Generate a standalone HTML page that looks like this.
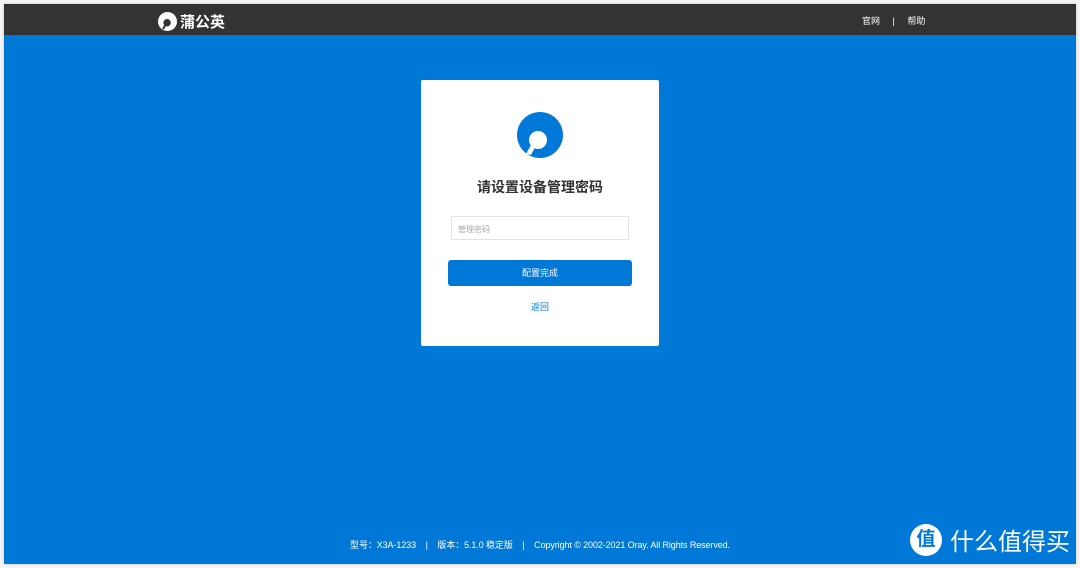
<!DOCTYPE html>
<html><head><meta charset="utf-8"><style>
*{margin:0;padding:0;box-sizing:border-box}
body{width:1080px;height:568px;background:#f4f4f4;font-family:"Liberation Sans","Noto Sans CJK SC",sans-serif;position:relative;overflow:hidden}
.frame{position:absolute;left:4px;top:4px;width:1072px;height:560px;background:#0078d7;box-shadow:0 0 2px #bbb}
.hdr{position:absolute;left:0;top:0;width:1072px;height:31px;background:#333}
.logo{position:absolute;left:154px;top:7px;display:flex;align-items:center;color:#fff;font-size:15px;font-weight:bold}
.nav{position:absolute;left:858px;top:10px;color:#fff;font-size:9px}
.card{position:absolute;left:417px;top:76px;width:238px;height:266px;background:#fff;border-radius:2px}
.title{position:absolute;top:97px;width:100%;text-align:center;font-size:14px;font-weight:bold;color:#333}
.inp{position:absolute;left:30px;top:136px;width:178px;height:24px;border:1px solid #e2e2e2;border-radius:2px;font-size:8px;color:#aaa;padding:7px 6px}
.btn{position:absolute;left:27px;top:180px;width:184px;height:26px;background:#0078d7;border-radius:3px;color:#fff;font-size:9px;text-align:center;line-height:26px}
.back{position:absolute;top:220px;width:100%;text-align:center;font-size:9px;color:#0078d7}
.foot{position:absolute;left:0;top:534px;width:1072px;text-align:center;color:#fff;font-size:9px;letter-spacing:-0.1px;padding-left:0}
.zdm{position:absolute;left:910px;top:522px;display:flex;align-items:center;color:#fff;font-size:24px}
.zdm .c{width:32px;height:32px;border-radius:50%;background:#fff;color:#0078d7;font-size:19px;font-weight:bold;text-align:center;line-height:32px;margin-right:8px}
</style></head><body>
<div class="frame">
 <div class="hdr">
  <div class="logo"><svg width="19" height="19" viewBox="0 0 46 46" style="margin-right:3px"><circle cx="23" cy="23" r="23" fill="#fff"/><circle cx="22" cy="26" r="9" fill="#333"/><path d="M15 31 L10 41 L15 42 L19 33Z" fill="#333"/></svg>蒲公英</div>
  <div class="nav">官网&nbsp;&nbsp;&nbsp;&nbsp;&nbsp;|&nbsp;&nbsp;&nbsp;&nbsp;&nbsp;帮助</div>
 </div>
 <div class="card">
  <svg style="position:absolute;left:96px;top:32px" width="46" height="46" viewBox="0 0 46 46"><circle cx="23" cy="23" r="23" fill="#0078d7"/><circle cx="21" cy="28" r="9" fill="#fff"/><path d="M14 33 L9 42 L14 43 L18 35Z" fill="#fff"/></svg>
  <div class="title">请设置设备管理密码</div>
  <div class="inp">管理密码</div>
  <div class="btn">配置完成</div>
  <div class="back">返回</div>
 </div>
 <div class="foot">型号：X3A-1233&nbsp;&nbsp;&nbsp;&nbsp;|&nbsp;&nbsp;&nbsp;&nbsp;版本：5.1.0 稳定版&nbsp;&nbsp;&nbsp;&nbsp;|&nbsp;&nbsp;&nbsp;&nbsp;Copyright © 2002-2021 Oray. All Rights Reserved.</div>
</div>
<div class="zdm"><div class="c">值</div>什么值得买</div>
</body></html>
